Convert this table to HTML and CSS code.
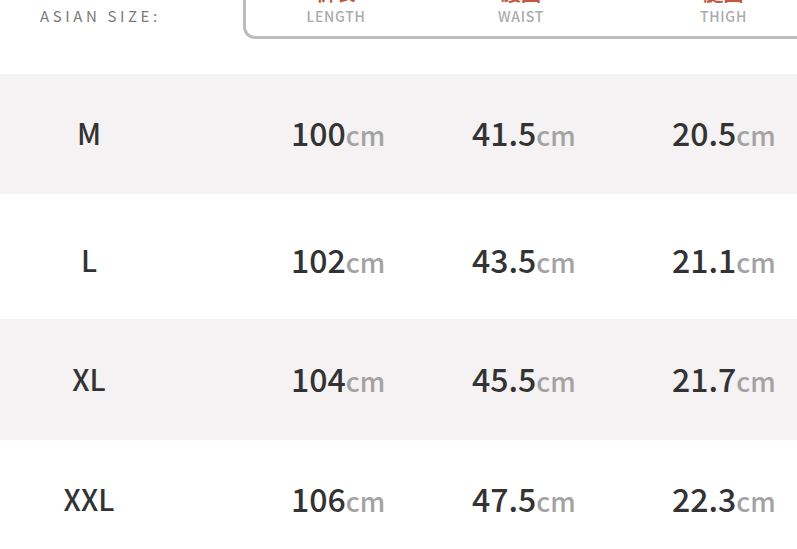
FILE: index.html
```html
<!DOCTYPE html>
<html>
<head>
<meta charset="utf-8">
<link rel="stylesheet" href="styles.css">
</head>
<body>
<div class="page">
  <div class="head">
    <div class="asian">ASIAN SIZE:</div>
    <div class="box">
      <div class="lab"><span class="zh">裤长</span><span class="en">LENGTH</span></div>
      <div class="lab"><span class="zh">腰围</span><span class="en">WAIST</span></div>
      <div class="lab last"><span class="zh">腿围</span><span class="en">THIGH</span></div>
    </div>
  </div>
  <div class="table">
    <div class="row shade r1">
      <div class="size">M</div>
      <div class="val">100<span class="u">cm</span></div>
      <div class="val">41.5<span class="u">cm</span></div>
      <div class="val">20.5<span class="u">cm</span></div>
    </div>
    <div class="row r2">
      <div class="size">L</div>
      <div class="val">102<span class="u">cm</span></div>
      <div class="val">43.5<span class="u">cm</span></div>
      <div class="val">21.1<span class="u">cm</span></div>
    </div>
    <div class="row shade r3">
      <div class="size">XL</div>
      <div class="val">104<span class="u">cm</span></div>
      <div class="val">45.5<span class="u">cm</span></div>
      <div class="val">21.7<span class="u">cm</span></div>
    </div>
    <div class="row r4">
      <div class="size">XXL</div>
      <div class="val">106<span class="u">cm</span></div>
      <div class="val">47.5<span class="u">cm</span></div>
      <div class="val">22.3<span class="u">cm</span></div>
    </div>
  </div>
</div>
</body>
</html>
```
FILE: styles.css
```css
html, body {
  margin: 0;
  padding: 0;
  background: #ffffff;
  overflow: hidden;
}
body {
  font-family: "Noto Sans CJK SC", "Noto Sans", sans-serif;
  width: 797px;
  height: 549px;
}
.page {
  display: flex;
  flex-direction: column;
}
.head {
  display: flex;
  height: 64px;
  margin-top: -25px;
}
.asian {
  width: 203px;
  padding-left: 40px;
  padding-top: 31px;
  font-size: 15px;
  line-height: 20px;
  letter-spacing: 3.6px;
  color: #7a7a7a;
  font-weight: 400;
  white-space: nowrap;
}
.box {
  flex: 1;
  border-left: 3px solid #bdbdbd;
  border-bottom: 3px solid #bdbdbd;
  border-bottom-left-radius: 12px;
  display: grid;
  grid-template-columns: 180px 190px 1fr;
}
.lab {
  display: flex;
  flex-direction: column;
  align-items: center;
}
.lab.last {
  padding-left: 34px;
}
.zh {
  font-size: 20px;
  line-height: 20px;
  margin-top: 8px;
  color: #c4573c;
  font-weight: 700;
}
.en {
  font-size: 14px;
  line-height: 18px;
  margin-top: 4px;
  letter-spacing: 0.7px;
  color: #ababab;
  font-weight: 500;
}
.table {
  margin-top: 35px;
  display: flex;
  flex-direction: column;
}
.row {
  display: grid;
  grid-template-columns: 291px 181px 200px 1fr;
  align-items: center;
  color: #333333;
  box-sizing: border-box;
  padding-bottom: 4px;
}
.shade {
  background: #f4f2f3;
}
.r1 { height: 120px; }
.r2 { height: 125px; padding-top: 9px; }
.r3 { height: 121px; }
.r4 { height: 121px; padding-bottom: 6px; }
.size {
  width: 178px;
  text-align: center;
  font-size: 29px;
  font-weight: 500;
}
.val {
  font-size: 32px;
  font-weight: 500;
  white-space: nowrap;
}
.u {
  font-size: 27px;
  color: #a3a3a3;
  font-weight: 500;
}
```
